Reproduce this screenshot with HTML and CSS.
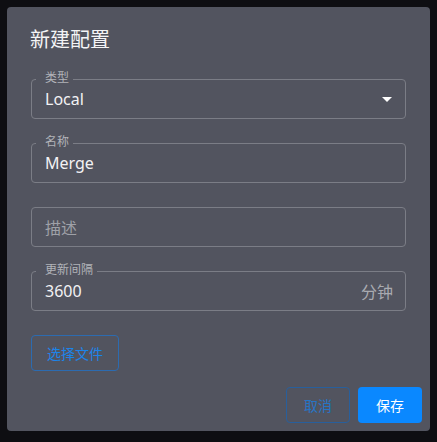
FILE: index.html
```html
<!DOCTYPE html>
<html lang="zh">
<head>
  <meta charset="UTF-8">
  <meta name="viewport" content="width=device-width, initial-scale=1.0">
  <title>新建配置</title>
  <link rel="stylesheet" href="styles.css">
</head>
<body>
  <div class="dialog">
    <div class="dialog-title">新建配置</div>

    <div class="dialog-body">
      <div class="field">
        <span class="field-label">类型</span>
        <span class="field-value">Local</span>
        <span class="caret"></span>
      </div>

      <div class="field">
        <span class="field-label">名称</span>
        <span class="field-value">Merge</span>
      </div>

      <div class="field">
        <span class="field-value placeholder">描述</span>
      </div>

      <div class="field">
        <span class="field-label">更新间隔</span>
        <span class="field-value">3600</span>
        <span class="suffix">分钟</span>
      </div>

      <div>
        <button class="btn btn-outline">选择文件</button>
      </div>
    </div>

    <div class="dialog-actions">
      <button class="btn btn-outline btn-dim">取消</button>
      <button class="btn btn-primary">保存</button>
    </div>
  </div>
</body>
</html>
```

FILE: styles.css
```css
body {
  margin: 0;
  padding: 7px;
  background-color: #0e0e12;
  font-family: "Noto Sans", "Noto Sans CJK SC", sans-serif;
  color: #f0f0f2;
}
.dialog {
  width: 423px;
  height: 424px;
  box-sizing: border-box;
  background-color: #52545f;
  border-radius: 4px;
  display: flex;
  flex-direction: column;
}
.dialog-title {
  padding: 16px 24px 0 23px;
  font-size: 20px;
  line-height: 32px;
  font-family: "Noto Sans CJK SC", sans-serif;
  color: #f4f4f6;
}
.dialog-body {
  padding: 24px 24px 0 24px;
  display: flex;
  flex-direction: column;
  gap: 24px;
  flex: 1;
}
.field {
  position: relative;
  height: 40px;
  box-sizing: border-box;
  border: 1px solid #7b7d86;
  border-radius: 4px;
  padding: 0 12px 0 13px;
  display: flex;
  align-items: center;
}
.field-label {
  position: absolute;
  top: -10px;
  left: 4px;
  padding: 0 4px 0 9px;
  font-size: 12px;
  line-height: 14px;
  font-family: "Noto Sans CJK SC", sans-serif;
  color: #b1b3b9;
  background-color: #52545f;
}
.field-value {
  flex: 1;
  font-size: 16px;
  line-height: 20px;
  color: #f2f2f4;
}
.placeholder {
  font-family: "Noto Sans CJK SC", sans-serif;
  color: #9fa1a8;
}
.suffix {
  font-size: 16px;
  font-family: "Noto Sans CJK SC", sans-serif;
  color: #a9abb1;
}
.caret {
  width: 0;
  height: 0;
  margin-right: 1px;
  border-left: 5px solid transparent;
  border-right: 5px solid transparent;
  border-top: 5px solid #ffffff;
}
.btn {
  height: 36px;
  min-width: 64px;
  padding: 0 15px;
  box-sizing: border-box;
  font-family: "Noto Sans CJK SC", sans-serif;
  font-size: 14px;
  border-radius: 4px;
  cursor: pointer;
}
.btn-outline {
  background: transparent;
  border: 1px solid #2c6bb0;
  color: #1c84ea;
}
.btn-dim {
  color: #2675c6;
  border-color: #285f9c;
}
.btn-primary {
  background-color: #0a88ff;
  border: none;
  color: #ffffff;
}
.dialog-actions {
  display: flex;
  justify-content: flex-end;
  gap: 8px;
  padding: 8px;
}
```
